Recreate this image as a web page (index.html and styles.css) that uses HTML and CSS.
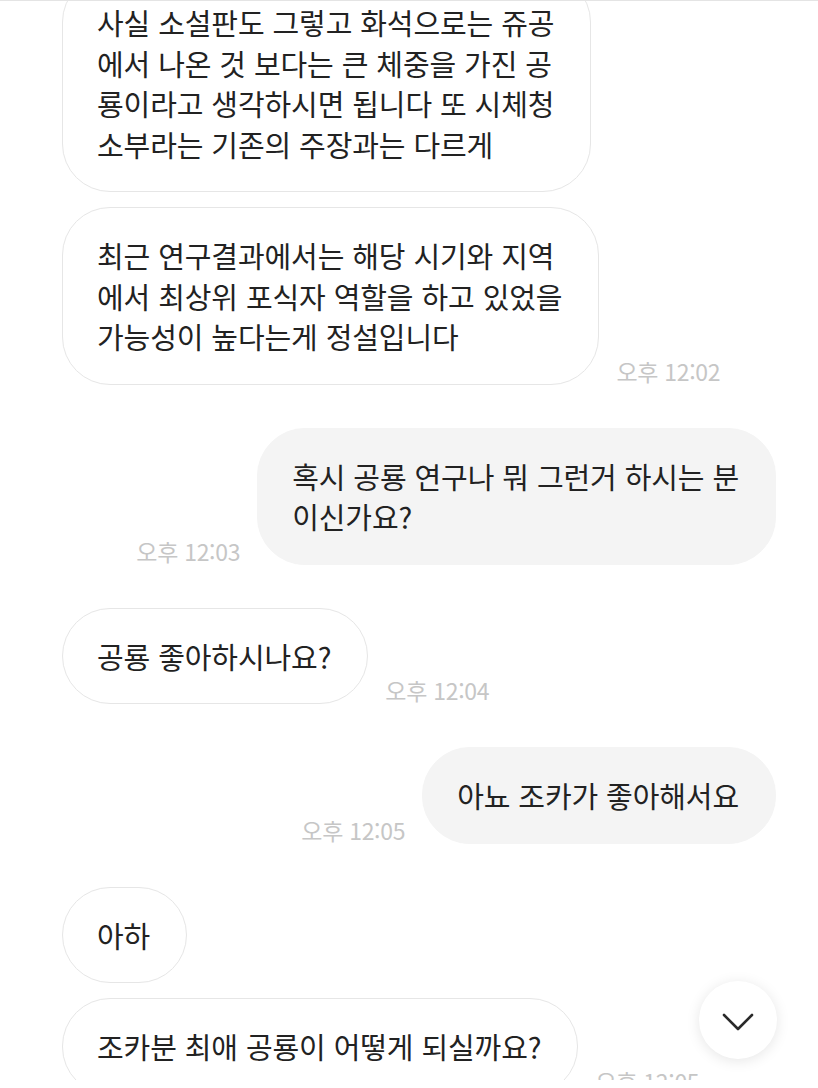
FILE: index.html
```html
<!DOCTYPE html>
<html lang="ko">
<head>
<meta charset="utf-8">
<title>채팅</title>
<link rel="stylesheet" href="styles.css">
</head>
<body>
<div class="screen">
  <div class="chat">
    <div class="row recv first">
      <div class="bubble">사실 소설판도 그렇고 화석으로는 쥬공<br>에서 나온 것 보다는 큰 체중을 가진 공<br>룡이라고 생각하시면 됩니다 또 시체청<br>소부라는 기존의 주장과는 다르게</div>
    </div>
    <div class="row recv near">
      <div class="bubble">최근 연구결과에서는 해당 시기와 지역<br>에서 최상위 포식자 역할을 하고 있었을<br>가능성이 높다는게 정설입니다</div>
      <span class="time">오후 12:02</span>
    </div>
    <div class="row sent far">
      <span class="time">오후 12:03</span>
      <div class="bubble">혹시 공룡 연구나 뭐 그런거 하시는 분<br>이신가요?</div>
    </div>
    <div class="row recv far">
      <div class="bubble">공룡 좋아하시나요?</div>
      <span class="time">오후 12:04</span>
    </div>
    <div class="row sent far">
      <span class="time">오후 12:05</span>
      <div class="bubble">아뇨 조카가 좋아해서요</div>
    </div>
    <div class="row recv far">
      <div class="bubble">아하</div>
    </div>
    <div class="row recv near">
      <div class="bubble">조카분 최애 공룡이 어떻게 되실까요?</div>
      <span class="time">오후 12:05</span>
    </div>
  </div>
  <button class="scroll-down" aria-label="아래로">
    <svg width="32" height="18" viewBox="0 0 32 18"><path d="M2 2 L16 16 L30 2" fill="none" stroke="#2a2a2a" stroke-width="2.6" stroke-linecap="round" stroke-linejoin="round"/></svg>
  </button>
</div>
</body>
</html>
```

FILE: styles.css
```css
html, body {
  margin: 0;
  padding: 0;
  background: #ffffff;
}

body {
  font-family: "Noto Sans CJK KR", "Noto Sans", sans-serif;
  color: #222222;
}

.screen {
  position: relative;
  width: 818px;
  height: 1080px;
  overflow: hidden;
  border-top: 1px solid #e4e4e4;
  box-sizing: border-box;
}

.chat {
  display: flex;
  flex-direction: column;
  padding: 0 42px 0 62px;
}

.row {
  display: flex;
  align-items: flex-end;
  gap: 17px;
}

.row.sent {
  justify-content: flex-end;
}

.row.first {
  margin-top: -27px;
}

.row.near {
  margin-top: 15px;
}

.row.far {
  margin-top: 43px;
}

.bubble {
  font-size: 29px;
  line-height: 40.5px;
  padding: 27px 36px 27px 34px;
  border-radius: 48px;
  white-space: nowrap;
  letter-spacing: -0.1px;
}

.recv .bubble {
  background: #ffffff;
  border: 1.5px solid #e6e6e6;
}

.sent .bubble {
  background: #f4f4f4;
  border: 1.5px solid #f4f4f4;
}

.time {
  font-size: 23px;
  line-height: 26px;
  color: #c6c6c6;
  margin-bottom: 1px;
  white-space: nowrap;
  letter-spacing: -0.3px;
}

.scroll-down {
  position: absolute;
  right: 41px;
  bottom: 21px;
  width: 78px;
  height: 78px;
  border-radius: 50%;
  border: none;
  background: #ffffff;
  box-shadow: 0 2px 14px rgba(0, 0, 0, 0.10);
  display: flex;
  align-items: center;
  justify-content: center;
  padding: 0;
}

.scroll-down svg {
  margin-top: 4px;
}
```
